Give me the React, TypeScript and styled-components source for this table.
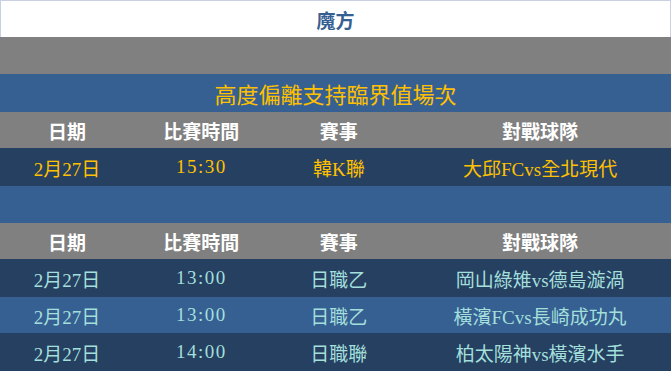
import React from "react";
import styled, { createGlobalStyle } from "styled-components";

const GlobalStyle = createGlobalStyle`
  html, body {
    margin: 0;
    padding: 0;
    background: #ffffff;
  }
  body {
    font-family: "Liberation Serif", "Noto Sans CJK TC", serif;
  }
`;

type Match = { date: string; time: string; league: string; teams: string };

const highlight: Match[] = [
  { date: "2月27日", time: "15:30", league: "韓K聯", teams: "大邱FCvs全北現代" },
];

const matches: Match[] = [
  { date: "2月27日", time: "13:00", league: "日職乙", teams: "岡山綠雉vs德島漩渦" },
  { date: "2月27日", time: "13:00", league: "日職乙", teams: "橫濱FCvs長崎成功丸" },
  { date: "2月27日", time: "14:00", league: "日職聯", teams: "柏太陽神vs橫濱水手" },
];

const heads = ["日期", "比賽時間", "賽事", "對戰球隊"];

export default function App() {
  return (
    <>
      <GlobalStyle />
      <Board>
        <Title>魔方</Title>
        <Band $bg="#808080" $h={37} />
        <Banner>高度偏離支持臨界值場次</Banner>
        <HeadRow />
        {highlight.map((m, i) => (
          <MatchRow key={i} match={m} bg="#254061" h={38} hot />
        ))}
        <Band $bg="#366092" $h={37} />
        <HeadRow />
        {matches.map((m, i) => (
          <MatchRow
            key={i}
            match={m}
            bg={i % 2 === 1 ? "#366092" : "#254061"}
            h={i % 2 === 1 ? 36 : 38}
          />
        ))}
      </Board>
    </>
  );
}

function HeadRow() {
  return (
    <Row $bg="#808080" $h={36}>
      {heads.map((h) => (
        <HeadCell key={h}>{h}</HeadCell>
      ))}
    </Row>
  );
}

function MatchRow({ match, bg, h, hot }: { match: Match; bg: string; h: number; hot?: boolean }) {
  return (
    <Row $bg={bg} $h={h}>
      <Cell $hot={hot}>{match.date}</Cell>
      <Cell $hot={hot} $spaced>{match.time}</Cell>
      <Cell $hot={hot}>{match.league}</Cell>
      <Cell $hot={hot}>{match.teams}</Cell>
    </Row>
  );
}

const Board = styled.div`
  width: 671px;
  display: flex;
  flex-direction: column;
`;

const Title = styled.div`
  height: 36px;
  border: 1px solid #c8d0e2;
  border-bottom: none;
  display: flex;
  align-items: center;
  justify-content: center;
  color: #366092;
  font-size: 19px;
  font-weight: bold;
`;

const Band = styled.div<{ $bg: string; $h: number }>`
  height: ${(p) => p.$h}px;
  background: ${(p) => p.$bg};
`;

const Banner = styled.div`
  height: 38px;
  background: #366092;
  color: #ffc000;
  font-size: 22px;
  display: flex;
  align-items: center;
  justify-content: center;
`;

const Row = styled.div<{ $bg: string; $h: number }>`
  height: ${(p) => p.$h}px;
  background: ${(p) => p.$bg};
  display: grid;
  grid-template-columns: 20% 20% 21% 39%;
  align-items: center;
`;

const HeadCell = styled.div`
  text-align: center;
  color: #ffffff;
  font-size: 19px;
  font-weight: bold;
`;

const Cell = styled.div<{ $hot?: boolean; $spaced?: boolean }>`
  text-align: center;
  font-size: 19px;
  color: ${(p) => (p.$hot ? "#ffc000" : "#a3dfdb")};
  letter-spacing: ${(p) => (p.$spaced ? "1.5px" : "0")};
`;
